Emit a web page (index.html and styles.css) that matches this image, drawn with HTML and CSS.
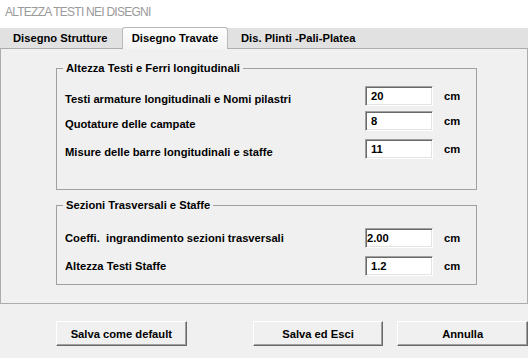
FILE: index.html
```html
<!DOCTYPE html>
<html lang="it">
<head>
    <meta charset="UTF-8">
    <title>Altezza testi nei disegni</title>
    <link rel="stylesheet" href="styles.css">
</head>
<body>
    <div class="title">ALTEZZA TESTI NEI DISEGNI</div>

    <div class="window">
        <div class="tabs">
            <div class="tab first">Disegno Strutture</div>
            <div class="tab active">Disegno Travate</div>
            <div class="tab">Dis. Plinti -Pali-Platea</div>
        </div>

        <div class="panel">
            <fieldset class="group group-ferri">
                <legend>Altezza Testi e Ferri longitudinali</legend>
                <div class="row">
                    <span class="label">Testi armature longitudinali e Nomi pilastri</span>
                    <input type="text" value="20">
                    <span class="unit">cm</span>
                </div>
                <div class="row near">
                    <span class="label">Quotature delle campate</span>
                    <input type="text" value="8">
                    <span class="unit">cm</span>
                </div>
                <div class="row">
                    <span class="label">Misure delle barre longitudinali e staffe</span>
                    <input type="text" value="11">
                    <span class="unit">cm</span>
                </div>
            </fieldset>

            <fieldset class="group group-staffe">
                <legend>Sezioni Trasversali e Staffe</legend>
                <div class="row">
                    <span class="label">Coeffi.&nbsp; ingrandimento sezioni trasversali</span>
                    <input type="text" class="tight" value="2.00">
                    <span class="unit">cm</span>
                </div>
                <div class="row">
                    <span class="label">Altezza Testi Staffe</span>
                    <input type="text" value="1.2">
                    <span class="unit">cm</span>
                </div>
            </fieldset>
        </div>

        <div class="buttons">
            <button>Salva come default</button>
            <button class="save">Salva ed Esci</button>
            <button class="cancel">Annulla</button>
        </div>
    </div>
</body>
</html>
```

FILE: styles.css
```css
body {
    margin: 0;
    background-color: #fff;
    font-family: "Liberation Sans", Arial, sans-serif;
    font-size: 11.2px;
    font-weight: bold;
    color: #000;
}
.title {
    height: 28px;
    padding-left: 5px;
    line-height: 24px;
    font-size: 12px;
    font-weight: normal;
    color: #9a9a9a;
    letter-spacing: -0.75px;
}
.window {
    width: 528px;
    height: 330px;
    background-color: #f0f0f0;
}
.tabs {
    display: flex;
    height: 20px;
    background-color: #e1e1e1;
    border-bottom: 1px solid #adadad;
}
.tab {
    box-sizing: border-box;
    line-height: 20px;
    padding: 0 0 0 13px;
    white-space: nowrap;
}
.tab.first {
    width: 122px;
}
.tab.active {
    width: 106px;
    padding: 0;
    margin: -1px 0 -1px 0;
    line-height: 21px;
    text-align: center;
    border: 1px solid #b9b9b9;
    border-bottom: none;
    border-radius: 3px 3px 0 0;
    background: linear-gradient(#fdfdfd, #f3f3f3);
}
.panel {
    box-sizing: border-box;
    height: 255px;
    border: 1px solid #adadad;
    border-top: none;
    padding: 12px 50px 0 55px;
}
.group {
    margin: 0;
    padding: 0 0 0 8px;
    border: 1px solid #a0a0a0;
}
.group legend {
    margin-left: -2px;
    padding: 0 3px;
    line-height: 14px;
}
.group-ferri {
    padding-top: 11px;
    padding-bottom: 30px;
}
.group-ferri .label {
    padding-top: 6px;
}
.group-staffe {
    margin-top: 8px;
    padding-top: 16px;
    padding-bottom: 8px;
}
.row {
    display: flex;
    align-items: center;
    height: 20px;
    margin-top: 8px;
}
legend + .row {
    margin-top: 0;
}
.row.near {
    margin-top: 5px;
}
.label {
    width: 300px;
}
input {
    width: 68px;
    height: 20px;
    box-sizing: border-box;
    margin: 0;
    padding: 0 0 0 5px;
    border: 1px solid;
    border-color: #a0a0a0 #fff #fff #a0a0a0;
    box-shadow: inset 1px 1px #696969, inset -1px -1px #e3e3e3;
    background-color: #fff;
    font-family: inherit;
    font-size: 11.2px;
    font-weight: bold;
    color: #000;
}
input.tight {
    padding-left: 1px;
}
.unit {
    margin-left: 11px;
}
.buttons {
    display: flex;
    padding: 17px 0 0 56px;
}
button {
    width: 131px;
    height: 25px;
    padding: 0;
    border: 1px solid;
    border-color: #fff #696969 #696969 #fff;
    box-shadow: inset -1px -1px #a0a0a0;
    background-color: #f0f0f0;
    font-family: inherit;
    font-size: 11.2px;
    font-weight: bold;
    color: #000;
}
button.save {
    margin-left: 66px;
}
button.cancel {
    margin-left: 14px;
}
```
